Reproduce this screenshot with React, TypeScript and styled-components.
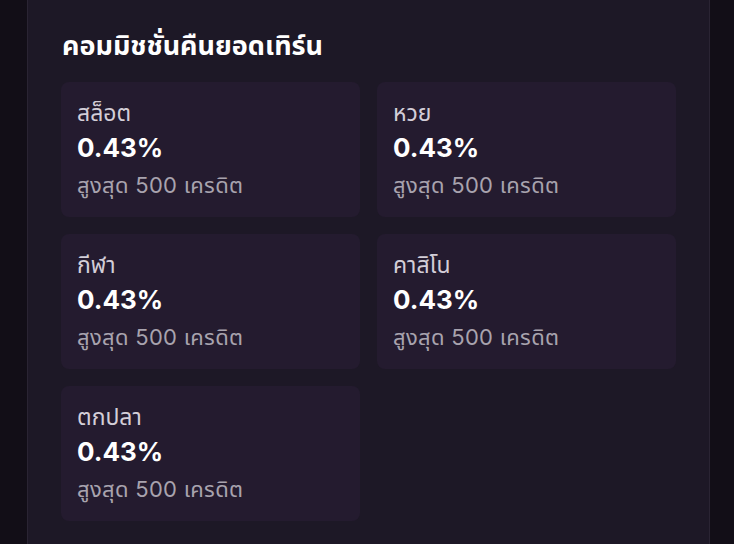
import React from "react";
import styled, { createGlobalStyle } from "styled-components";

const Global = createGlobalStyle`
  html, body { margin: 0; padding: 0; background: #120e17; }
  body {
    font-family: "Inter", "Noto Sans Thai", "Noto Sans", "DejaVu Sans", sans-serif;
    -webkit-font-smoothing: antialiased;
  }
`;

const Page = styled.div`
  width: 734px;
  height: 544px;
  overflow: hidden;
  padding: 0 24px 0 27px;
  box-sizing: border-box;
`;

const Panel = styled.section`
  margin-top: -20px;
  background: #1d1826;
  border: 1px solid #2a2433;
  border-radius: 12px;
  padding: 49px 33px 40px 33px;
  min-height: 620px;
  box-sizing: border-box;
`;

const Title = styled.h2`
  margin: 0 0 20px 1px;
  font-size: 27px;
  line-height: 32px;
  font-weight: 700;
  color: #ffffff;
  letter-spacing: 0;
`;

const Grid = styled.div`
  display: grid;
  grid-template-columns: 1fr 1fr;
  gap: 17px;
`;

const Card = styled.div`
  background: #241b2f;
  border-radius: 8px;
  height: 135px;
  box-sizing: border-box;
  padding: 16px 16px;
  display: flex;
  flex-direction: column;
`;

const Label = styled.div`
  font-size: 23px;
  line-height: 30px;
  color: #d3ced8;
`;

const Value = styled.div`
  font-size: 26px;
  line-height: 40px;
  font-weight: 700;
  color: #ffffff;
`;

const Sub = styled.div`
  font-size: 22px;
  line-height: 35px;
  color: #a8a3ae;
  letter-spacing: 0.3px;
`;

const items = ["สล็อต", "หวย", "กีฬา", "คาสิโน", "ตกปลา"];

export default function App() {
  return (
    <Page>
      <Global />
      <Panel>
        <Title>คอมมิชชั่นคืนยอดเทิร์น</Title>
        <Grid>
          {items.map((name) => (
            <Card key={name}>
              <Label>{name}</Label>
              <Value>0.43%</Value>
              <Sub>สูงสุด 500 เครดิต</Sub>
            </Card>
          ))}
        </Grid>
      </Panel>
    </Page>
  );
}
